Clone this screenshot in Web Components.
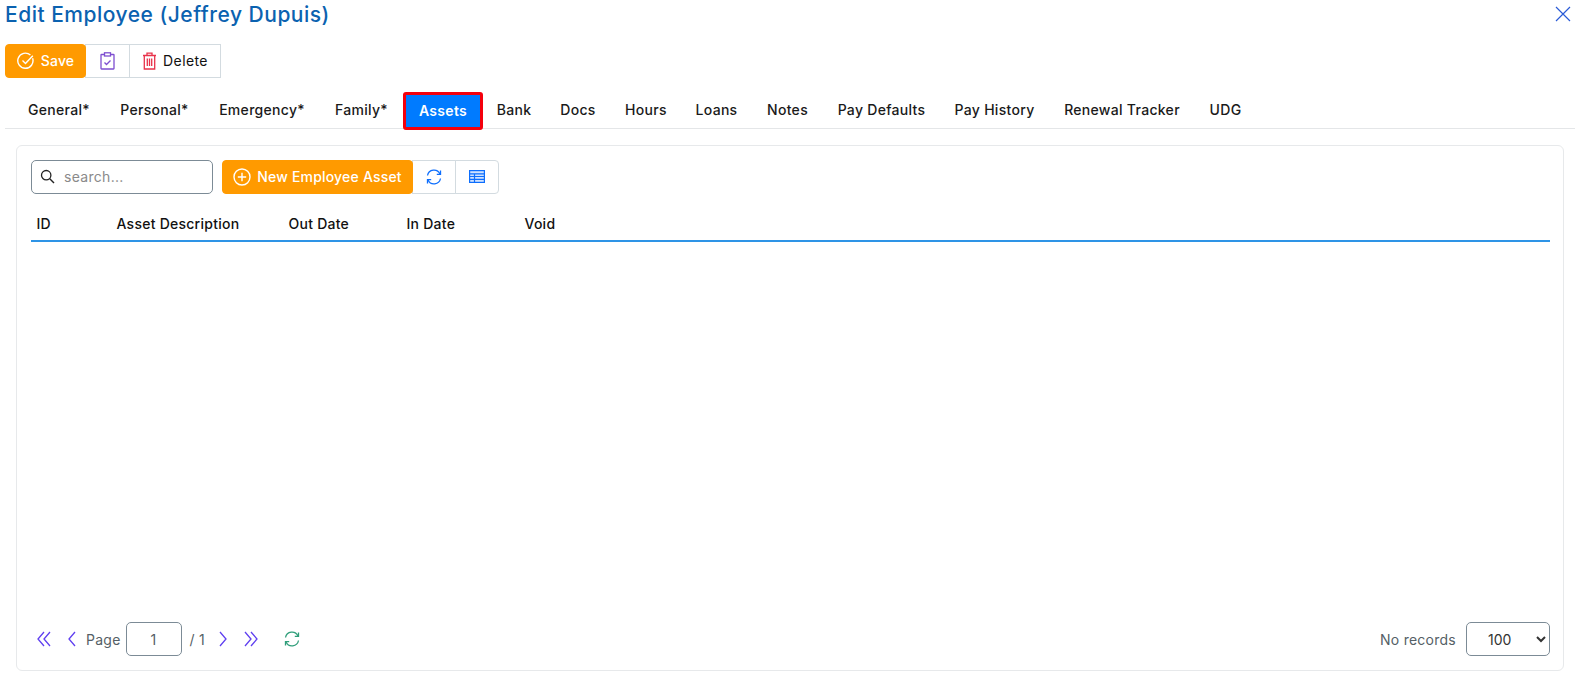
<!DOCTYPE html>
<html lang="en">
<head>
<meta charset="utf-8">
<title>Edit Employee</title>
<style>
html,body{margin:0;padding:0;background:#fff;}
body{font-family:Inter,"Liberation Sans",sans-serif;color:#111;}
</style>
</head>
<body>
<employee-page></employee-page>
<script>
class PageTitle extends HTMLElement {
    constructor() {
        super();
        this.attachShadow({ mode: 'open' }).innerHTML = `
        <style>
        :host{ display:flex; justify-content:space-between; align-items:flex-start; height:44px; padding:0 4px 0 5px; box-sizing:border-box; }
        h1{ margin:0; font:500 21px/29px Inter,"Liberation Sans",sans-serif; letter-spacing:.5px; color:#0b62b0; }
        svg{ display:block; margin-top:6px; }
        </style>
        <h1><slot></slot></h1>
        <svg width="16" height="16" viewBox="0 0 16 16"><path d="M1 1l14 14M15 1L1 15" stroke="#2a5bd7" stroke-width="1.2" fill="none"/></svg>
        `;
    }
}
customElements.define('page-title', PageTitle);

class BtnGroup extends HTMLElement {
    constructor() {
        super();
        this.attachShadow({ mode: 'open' }).innerHTML = `
        <style>
        :host{ display:inline-flex; height:34px; }
        ::slotted(group-btn:not(:first-child)){ margin-left:-1px; }
        </style>
        <slot></slot>
        `;
    }
}
customElements.define('btn-group', BtnGroup);

class GroupBtn extends HTMLElement {
    constructor() {
        super();
        this.attachShadow({ mode: 'open' }).innerHTML = `
        <style>
        :host{ display:inline-flex; align-items:center; justify-content:center; gap:6px; box-sizing:border-box; height:34px; padding-bottom:1px;
            border:1px solid #d3dbe0; background:#fff; color:#111; font:400 14px Inter,"Liberation Sans",sans-serif; letter-spacing:.4px; white-space:nowrap; }
        :host([primary]){ background:#ff9a00; border-color:#ff9a00; color:#fff; font-weight:500; letter-spacing:.2px; border-radius:4px; position:relative; z-index:1; }
        :host([end]){ border-radius:0 4px 4px 0; }
        ::slotted(svg){ display:block; flex:none; }
        </style>
        <slot></slot>
        `;
    }
}
customElements.define('group-btn', GroupBtn);

class TabBar extends HTMLElement {
    constructor() {
        super();
        this.attachShadow({ mode: 'open' }).innerHTML = `
        <style>
        :host{ display:flex; align-items:flex-start; height:36px; margin:14px 0 0 5px; padding-left:8px; border-bottom:1px solid #e4e6e8; font:500 14px Inter,"Liberation Sans",sans-serif; letter-spacing:.3px; color:#1a1a1a; }
        </style>
        <slot></slot>
        `;
    }
}
customElements.define('tab-bar', TabBar);

class TabItem extends HTMLElement {
    constructor() {
        super();
        this.attachShadow({ mode: 'open' }).innerHTML = `
        <style>
        :host{ display:flex; align-items:center; justify-content:center; box-sizing:border-box; height:37px; padding-bottom:2px; white-space:nowrap; }
        :host([active]){ background:#007bff; color:#fff; border:3px solid #f4000c; border-radius:3px; height:38px; font-weight:600; }
        </style>
        <slot></slot>
        `;
    }
    connectedCallback() {
        const w = this.getAttribute('w');
        if (w) this.style.width = w + 'px';
    }
}
customElements.define('tab-item', TabItem);

class DataCard extends HTMLElement {
    constructor() {
        super();
        this.attachShadow({ mode: 'open' }).innerHTML = `
        <style>
        :host{ display:flex; flex-direction:column; box-sizing:border-box; height:526px; margin:16px 11px 0 16px; padding:14px 13px 14px 14px; border:1px solid #e7e9eb; border-radius:6px; }
        </style>
        <slot></slot>
        `;
    }
}
customElements.define('data-card', DataCard);

class SearchBox extends HTMLElement {
    constructor() {
        super();
        this.attachShadow({ mode: 'open' }).innerHTML = `
        <style>
        :host{ display:flex; align-items:center; gap:9px; box-sizing:border-box; width:182px; height:34px; padding:0 8px; border:1px solid #7c8b96; border-radius:5px; }
        input{ border:0; outline:0; padding:0 0 2px; width:130px; background:none; font:400 14px Inter,"Liberation Sans",sans-serif; letter-spacing:.3px; }
        input::placeholder{ color:#8a8a8a; opacity:1; }
        svg{ margin-top:-2px; }
        </style>
        <svg width="15" height="15" viewBox="0 0 15 15"><circle cx="6.2" cy="6.2" r="4.7" fill="none" stroke="#222" stroke-width="1.3"/><path d="M9.8 9.8l4.2 4.2" stroke="#222" stroke-width="1.4"/></svg>
        <input placeholder="search...">
        `;
    }
}
customElements.define('search-box', SearchBox);

class GridHead extends HTMLElement {
    constructor() {
        super();
        this.attachShadow({ mode: 'open' }).innerHTML = `
        <style>
        :host{ display:grid; grid-template-columns:80px 172px 118px 118px 1fr; align-items:end; height:48px; box-sizing:border-box; padding:0 0 8px 5.5px; border-bottom:2px solid #2e94e6; font:500 14px Inter,"Liberation Sans",sans-serif; letter-spacing:.25px; color:#111; }
        </style>
        <slot></slot>
        `;
    }
}
customElements.define('grid-head', GridHead);

class PagerBar extends HTMLElement {
    constructor() {
        super();
        const chev = (d, w) => `<svg width="${w}" height="16" viewBox="0 0 ${w} 16"><path d="${d}" fill="none" stroke="#5f3ff0" stroke-width="1.3"/></svg>`;
        this.attachShadow({ mode: 'open' }).innerHTML = `
        <style>
        :host{ display:flex; align-items:center; height:34px; margin-top:auto; font:400 14px Inter,"Liberation Sans",sans-serif; letter-spacing:.25px; color:#555f66; }
        .left,.right{ display:flex; align-items:center; }
        .right{ margin-left:auto; gap:10px; }
        svg{ display:block; flex:none; }
        .box{ display:flex; align-items:center; justify-content:center; box-sizing:border-box; width:56px; height:34px; margin:0 8px 0 5px; border:1px solid #7c8b96; border-radius:5px; }
        select{ box-sizing:border-box; width:84px; height:34px; padding:0 0 0 17px; border:1px solid #7c8b96; border-radius:5px; background:#fff; color:#333; font:400 14px Inter,"Liberation Sans",sans-serif; }
        </style>
        <div class="left">
            <span style="margin-left:6px"></span>${chev('M7 1L1 8l6 7M13 1L7 8l6 7', 14)}
            <span style="width:16px"></span>${chev('M8 1L2 8l6 7', 9)}
            <span style="width:10px"></span><span>Page</span>
            <div class="box">1</div>
            <span>/ 1</span>
            <span style="width:14px"></span>${chev('M1 1l6 7-6 7', 9)}
            <span style="width:16px"></span>${chev('M1 1l6 7-6 7M7 1l6 7-6 7', 14)}
            <span style="width:26px"></span>
            <svg width="16" height="16" viewBox="0 0 16 16" fill="none" stroke="#2f9e7a" stroke-width="1.3"><path d="M1.5 6.5A6.6 6.6 0 0 1 14 5"/><path d="M14.5 1.5V5.3H10.8"/><path d="M14.5 9.5A6.6 6.6 0 0 1 2 11"/><path d="M1.5 14.5V10.7H5.2"/></svg>
        </div>
        <div class="right">
            <span>No records</span>
            <select><option>100</option></select>
        </div>
        `;
    }
}
customElements.define('pager-bar', PagerBar);

class EmployeePage extends HTMLElement {
    constructor() {
        super();
        this.attachShadow({ mode: 'open' }).innerHTML = `
        <style>
        :host{ display:block; height:681px; overflow:hidden; }
        .tools{ display:flex; margin-left:5px; }
        .gridbar{ display:flex; gap:9px; }
        </style>
        <page-title>Edit Employee (Jeffrey Dupuis)</page-title>
        <div class="tools">
            <btn-group>
                <group-btn primary style="width:81px">
                    <svg width="18" height="18" viewBox="0 0 18 18" fill="none" stroke="#fff" stroke-width="1.4"><path d="M15.6 6.3A7.6 7.6 0 1 1 13.4 3"/><path d="M5.5 8.4l3 3L15.8 3.8"/></svg>
                    Save
                </group-btn>
                <group-btn style="width:45px">
                    <svg width="15" height="18" viewBox="0 0 15 18" fill="none" stroke="#7e4fd0" stroke-width="1.3"><rect x="1" y="2.5" width="13" height="14.5" rx=".5"/><rect x="4.5" y=".8" width="6" height="3.2" fill="#fff"/><path d="M4.5 10.5l2 2 4-4"/></svg>
                </group-btn>
                <group-btn style="width:92px">
                    <svg width="15" height="18" viewBox="0 0 15 18" fill="none" stroke="#e8324a" stroke-width="1.3"><path d="M1 3.5h13M5 3.5V1.2h5v2.3M2.3 3.5V17h10.4V3.5M5.3 6.5V14M7.5 6.5V14M9.7 6.5V14"/></svg>
                    Delete
                </group-btn>
            </btn-group>
        </div>
        <tab-bar>
            <tab-item w="92">General*</tab-item>
            <tab-item w="99">Personal*</tab-item>
            <tab-item w="116">Emergency*</tab-item>
            <tab-item w="83">Family*</tab-item>
            <tab-item active w="80">Assets</tab-item>
            <tab-item w="62">Bank</tab-item>
            <tab-item w="66">Docs</tab-item>
            <tab-item w="70">Hours</tab-item>
            <tab-item w="71">Loans</tab-item>
            <tab-item w="71">Notes</tab-item>
            <tab-item w="117">Pay Defaults</tab-item>
            <tab-item w="109">Pay History</tab-item>
            <tab-item w="146">Renewal Tracker</tab-item>
            <tab-item w="61">UDG</tab-item>
        </tab-bar>
        <data-card>
            <div class="gridbar">
                <search-box></search-box>
                <btn-group>
                    <group-btn primary style="width:191px">
                        <svg width="18" height="18" viewBox="0 0 18 18" fill="none" stroke="#fff" stroke-width="1.4"><circle cx="9" cy="9" r="8"/><path d="M9 4.8v8.4M4.8 9h8.4"/></svg>
                        New Employee Asset
                    </group-btn>
                    <group-btn style="width:44px">
                        <svg width="16" height="16" viewBox="0 0 16 16" fill="none" stroke="#0d6efd" stroke-width="1.3"><path d="M1.5 6.5A6.6 6.6 0 0 1 14 5"/><path d="M14.5 1.5V5.3H10.8"/><path d="M14.5 9.5A6.6 6.6 0 0 1 2 11"/><path d="M1.5 14.5V10.7H5.2"/></svg>
                    </group-btn>
                    <group-btn end style="width:44px">
                        <svg width="16" height="13" viewBox="0 0 16 13" fill="none" stroke="#0d6efd" stroke-width="1.2"><rect x=".6" y=".6" width="14.8" height="11.8" fill="#cfe2ff"/><path d="M.6 3.8h14.8M.6 6.5h14.8M.6 9.4h14.8M5.5 3.8v8.6"/></svg>
                    </group-btn>
                </btn-group>
            </div>
            <grid-head>
                <span>ID</span><span>Asset Description</span><span>Out Date</span><span>In Date</span><span>Void</span>
            </grid-head>
            <pager-bar></pager-bar>
        </data-card>
        `;
    }
}
customElements.define('employee-page', EmployeePage);
</script>
</body>
</html>
